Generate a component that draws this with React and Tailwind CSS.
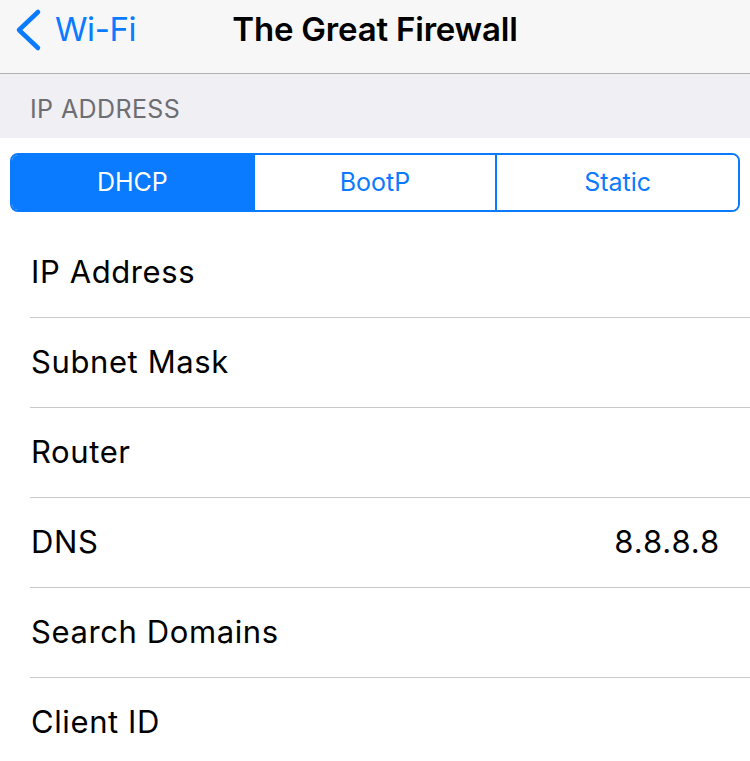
import { useState } from 'react'

const ROWS = [
  { label: 'IP Address' },
  { label: 'Subnet Mask' },
  { label: 'Router' },
  { label: 'DNS', value: '8.8.8.8' },
  { label: 'Search Domains' },
  { label: 'Client ID' },
]

const MODES = ['DHCP', 'BootP', 'Static']

export default function App() {
  const [mode, setMode] = useState('DHCP')

  return (
    <div
      className="w-[750px] h-[761px] overflow-hidden bg-white text-black"
      style={{ fontFamily: 'Inter, "Noto Sans", sans-serif' }}
    >
      {/* Nav bar */}
      <div className="relative h-[74px] bg-[#f7f7f8] border-b border-[#b2b2b2] flex items-center justify-center">
        <button className="absolute left-[14px] top-0 h-[60px] flex items-center gap-[11px] text-[#0a7aff]">
          <svg width="30" height="44" viewBox="0 0 30 44" fill="none">
            <path
              d="M24 4 L5 22 L24 40"
              stroke="currentColor"
              strokeWidth="4.5"
              strokeLinecap="round"
              strokeLinejoin="round"
            />
          </svg>
          <span className="text-[33px] tracking-[-0.4px]">Wi-Fi</span>
        </button>
        <h1 className="-mt-[14px] text-[33px] font-semibold tracking-[-0.2px]">The Great Firewall</h1>
      </div>

      {/* Section header */}
      <div className="h-[64px] bg-[#efeff4] flex items-center pl-[30px] pt-[8px]">
        <span className="text-[25px] text-[#6d6d72] tracking-[0.4px]">IP ADDRESS</span>
      </div>

      {/* Segmented control */}
      <div className="px-[10px] pt-[15px] pb-[16px]">
        <div className="h-[59px] flex rounded-[8px] border-2 border-[#0a7aff] overflow-hidden">
          {MODES.map((m, i) => (
            <button
              key={m}
              onClick={() => setMode(m)}
              className={
                'flex-1 flex items-center justify-center pt-[1px] text-[25px] ' +
                (i > 0 ? 'border-l-2 border-[#0a7aff] ' : '') +
                (mode === m ? 'bg-[#0a7aff] text-white' : 'bg-white text-[#0a7aff]')
              }
            >
              {m}
            </button>
          ))}
        </div>
      </div>

      {/* Rows */}
      <div className="pl-[30px]">
        {ROWS.map((r) => (
          <div
            key={r.label}
            className="h-[90px] flex items-center justify-between pr-[30px] border-b border-[#c8c7cc]"
          >
            <span className="pl-[1px] text-[31px] tracking-[0.6px]">{r.label}</span>
            {r.value && <span className="text-[31px] tracking-[0.9px]">{r.value}</span>}
          </div>
        ))}
      </div>
    </div>
  )
}
